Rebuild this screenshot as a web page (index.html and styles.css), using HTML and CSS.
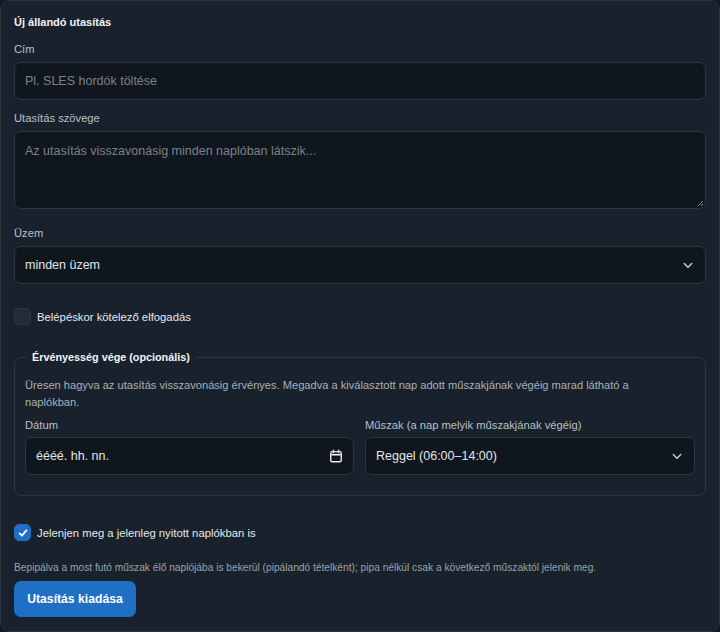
FILE: index.html
```html
<!DOCTYPE html>
<html lang="hu">
<head>
<meta charset="utf-8">
<link rel="stylesheet" href="styles.css">
</head>
<body>
<form class="card">
  <h2 class="title">Új állandó utasítás</h2>

  <label class="label l-cim">Cím</label>
  <div class="input"><span class="ph">Pl. SLES hordók töltése</span></div>

  <label class="label l-text">Utasítás szövege</label>
  <div class="input textarea"><span class="ph">Az utasítás visszavonásig minden naplóban látszik...</span>
    <svg class="grip" width="8" height="8" viewBox="0 0 8 8"><path d="M7 2L2 7M7 5L5 7" stroke="#8a929a" stroke-width="1"/></svg>
  </div>

  <label class="label l-uzem">Üzem</label>
  <div class="input select"><span class="val">minden üzem</span>
    <svg class="chev" width="12" height="12" viewBox="0 0 16 16"><path d="M3 6l5 5 5-5" fill="none" stroke="#c6cbd1" stroke-width="2" stroke-linecap="round" stroke-linejoin="round"/></svg>
  </div>

  <div class="check-row first">
    <span class="box"></span>
    <span class="check-label">Belépéskor kötelező elfogadás</span>
  </div>

  <fieldset class="fs">
    <legend>Érvényesség vége (opcionális)</legend>
    <p class="desc">Üresen hagyva az utasítás visszavonásig érvényes. Megadva a kiválasztott nap adott műszakjának végéig marad látható a naplókban.</p>
    <div class="grid">
      <div>
        <label class="label l-grid">Dátum</label>
        <div class="input select"><span class="val">éééé. hh. nn.</span>
          <svg class="cal" width="14" height="14" viewBox="0 0 16 16"><rect x="2" y="3" width="12" height="11.5" rx="1.5" fill="none" stroke="#e6e8ea" stroke-width="1.6"/><path d="M2.5 6.5h11" stroke="#e6e8ea" stroke-width="2"/><path d="M5 1.5v2.5M11 1.5v2.5" stroke="#e6e8ea" stroke-width="1.6" stroke-linecap="round"/></svg>
        </div>
      </div>
      <div>
        <label class="label l-grid">Műszak (a nap melyik műszakjának végéig)</label>
        <div class="input select"><span class="val">Reggel (06:00–14:00)</span>
          <svg class="chev" width="12" height="12" viewBox="0 0 16 16"><path d="M3 6l5 5 5-5" fill="none" stroke="#c6cbd1" stroke-width="2" stroke-linecap="round" stroke-linejoin="round"/></svg>
        </div>
      </div>
    </div>
  </fieldset>

  <div class="check-row second">
    <span class="box checked"><svg width="12" height="12" viewBox="0 0 16 16"><path d="M3.5 8.5l3 3 6-7" fill="none" stroke="#fff" stroke-width="2.4" stroke-linecap="round" stroke-linejoin="round"/></svg></span>
    <span class="check-label">Jelenjen meg a jelenleg nyitott naplókban is</span>
  </div>

  <p class="hint">Bepipálva a most futó műszak élő naplójába is bekerül (pipálandó tételként); pipa nélkül csak a következő műszaktól jelenik meg.</p>

  <button type="button" class="btn">Utasítás kiadása</button>
</form>
</body>
</html>
```

FILE: styles.css
```css
* { box-sizing: border-box; }
html, body { margin: 0; padding: 0; background: #121922; }
body {
  font-family: "Liberation Sans", Arial, sans-serif;
  color: #dee2e6;
  width: 720px;
  height: 632px;
}
.card {
  display: flex;
  flex-direction: column;
  width: 720px;
  height: 632px;
  background: #18212c;
  border: 1px solid #2b3541;
  border-radius: 10px;
  padding: 12px 13px 0 13px;
}
.title {
  margin: 0;
  font-size: 11px;
  font-weight: bold;
  color: #f2f4f6;
  line-height: 18px;
}
.label {
  display: block;
  font-size: 11.2px;
  line-height: 14px;
  color: #b9c0c7;
  margin: 0 0 6px;
}
.l-cim { margin-top: 11px; }
.l-text { margin-top: 11px; }
.l-uzem { margin-top: 17px; }
.l-grid { margin-top: 7px; margin-bottom: 5px; }
.input {
  position: relative;
  display: flex;
  align-items: center;
  height: 38px;
  background: #10161e;
  border: 1px solid #2c3642;
  border-radius: 7px;
  padding: 0 10px;
  font-size: 12.5px;
}
.ph { color: #7a828b; }
.val { color: #e3e6e9; }
.textarea {
  height: 78px;
  align-items: flex-start;
  padding-top: 12px;
}
.grip { position: absolute; right: 1px; bottom: 1px; }
.select { justify-content: space-between; }
.chev { margin-right: 1px; }
.check-row {
  display: flex;
  align-items: center;
  gap: 6px;
  height: 17px;
}
.check-row.first { margin-top: 24px; }
.check-row.second { margin-top: 28px; }
.box {
  width: 17px;
  height: 17px;
  border-radius: 5px;
  background: #222c38;
  border: 1px solid #2d3845;
  display: flex;
  align-items: center;
  justify-content: center;
}
.box.checked {
  background: #1f6fc5;
  border-color: #1f6fc5;
}
.check-label {
  font-size: 11.3px;
  color: #e6e9ec;
}
.fs {
  margin: 24px 0 0 0;
  border: 1px solid #2b3541;
  border-radius: 7px;
  padding: 0 10px 20px 10px;
  width: 692px;
  min-width: 0;
}
.fs legend {
  font-size: 10.8px;
  font-weight: bold;
  color: #f2f4f6;
  padding: 0 5px;
  margin-left: 2px;
  line-height: 16px;
}
.desc {
  margin: 12px 0 0 0;
  max-width: 650px;
  font-size: 11.1px;
  line-height: 17px;
  color: #aab1b8;
}
.grid {
  display: grid;
  grid-template-columns: 329px 330px;
  column-gap: 11px;
}
.hint {
  margin: 19px 0 0 0;
  font-size: 10.2px;
  line-height: 16px;
  color: #9aa2aa;
}
.btn {
  margin-top: 5px;
  align-self: flex-start;
  width: 122px;
  height: 36px;
  background: #1f6fc5;
  border: none;
  border-radius: 7px;
  color: #fff;
  font-family: inherit;
  font-size: 12.2px;
  font-weight: bold;
}
```
